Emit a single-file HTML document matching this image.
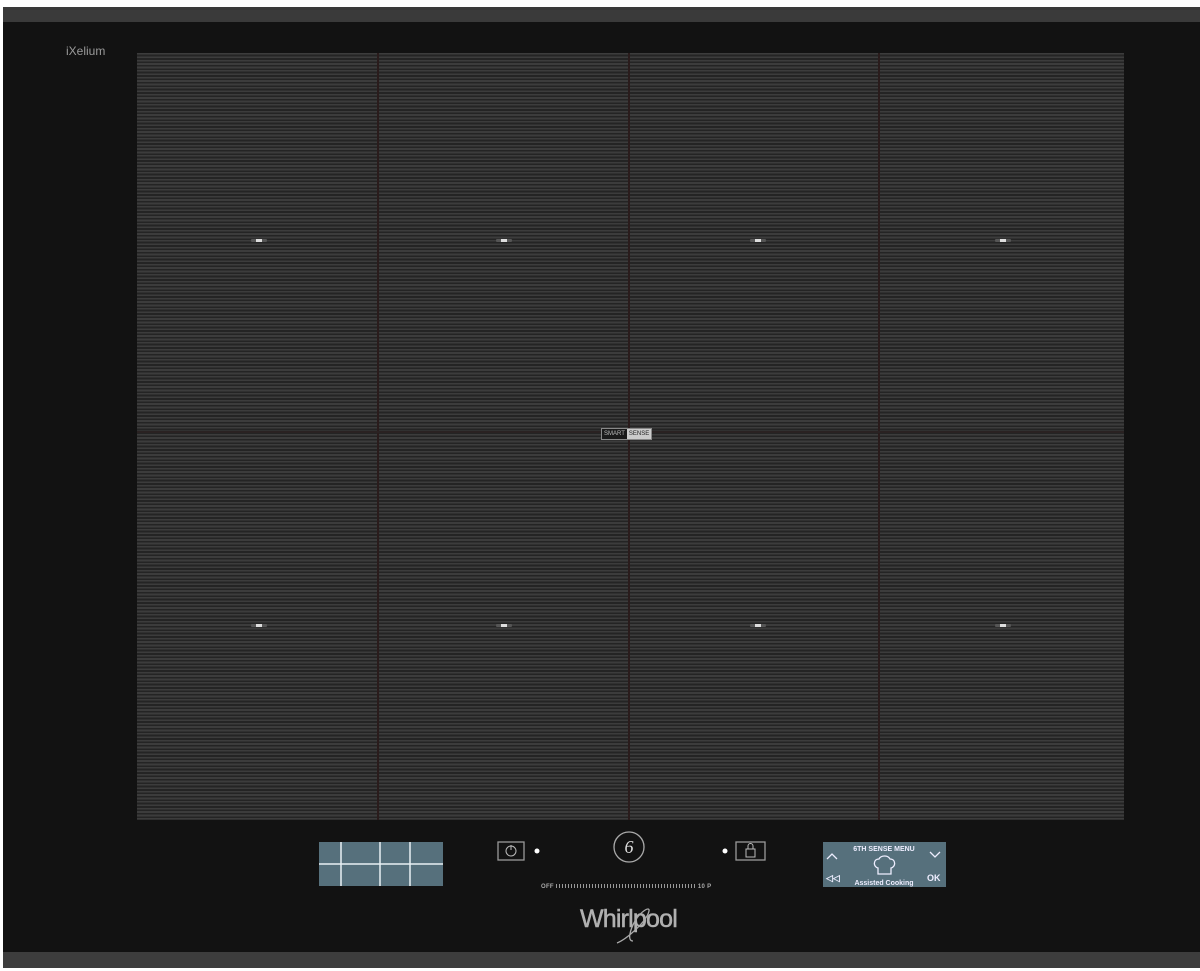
<!DOCTYPE html>
<html><head><meta charset="utf-8"><style>
body{margin:0;width:1200px;height:971px;background:#fff;position:relative;overflow:hidden;font-family:"Liberation Sans",sans-serif}
.frame{position:absolute;left:3px;top:7px;width:1197px;height:961px;background:#121212}
.tb{position:absolute;left:3px;top:7px;width:1197px;height:15px;background:#3a3a3a}
.bb{position:absolute;left:3px;top:952px;width:1197px;height:16px;background:#3d3d3d}
.area{position:absolute;left:137px;top:53px;width:987px;height:767px;background:repeating-linear-gradient(180deg,#3c3c3c 0,#3c3c3c 1.7px,#242424 1.7px,#242424 3.4px)}
.v{position:absolute;top:53px;width:2px;height:767px;background:#2a1c1c}
.h{position:absolute;left:137px;top:431px;width:987px;height:2px;background:#2a2222}
.m{position:absolute;width:16px;height:3px;background:#555;border-radius:1px}
.m::after{content:"";position:absolute;left:5px;top:0;width:6px;height:3px;background:#ddd}
</style></head><body>
<div class="frame"></div><div class="tb"></div><div class="bb"></div>
<div style="position:absolute;left:66px;top:44px;color:#9a9a9a;font-size:12px">iXelium</div>
<div class="area"></div>
<div class="v" style="left:377px"></div><div class="v" style="left:628px"></div><div class="v" style="left:878px"></div>
<div class="h"></div>
<div class="m" style="left:251px;top:239px"></div><div class="m" style="left:496px;top:239px"></div><div class="m" style="left:750px;top:239px"></div><div class="m" style="left:995px;top:239px"></div>
<div class="m" style="left:251px;top:624px"></div><div class="m" style="left:496px;top:624px"></div><div class="m" style="left:750px;top:624px"></div><div class="m" style="left:995px;top:624px"></div>
<div style="position:absolute;left:601px;top:428px;height:10px;border:1px solid #888;background:#1a1a1a;font-size:6px;line-height:10px;color:#bbb;display:flex"><span style="padding:0 2px">SMART</span><span style="background:#ccc;color:#222;padding:0 2px">SENSE</span></div>
<svg style="position:absolute;left:319px;top:842px" width="124" height="44"><rect width="124" height="44" fill="#56707c"/><g stroke="#e8f0f4" stroke-width="1.5"><line x1="0" y1="22" x2="124" y2="22"/><line x1="22" y1="0" x2="22" y2="44"/><line x1="61" y1="0" x2="61" y2="44"/><line x1="91" y1="0" x2="91" y2="44"/></g></svg>
<svg style="position:absolute;left:496px;top:840px" width="50" height="24"><rect x="2" y="2" width="26" height="18" fill="none" stroke="#999" stroke-width="1.3"/><circle cx="15" cy="11" r="5" fill="none" stroke="#bbb"/><line x1="15" y1="5" x2="15" y2="10" stroke="#bbb"/><circle cx="41" cy="11" r="2.5" fill="#fff"/></svg>
<svg style="position:absolute;left:612px;top:830px" width="34" height="34"><circle cx="17" cy="17" r="15" fill="none" stroke="#aaa" stroke-width="1.3"/><text x="17" y="23" text-anchor="middle" font-family="Liberation Serif" font-style="italic" font-size="18" fill="#ddd">6</text></svg>
<svg style="position:absolute;left:718px;top:840px" width="50" height="24"><circle cx="7" cy="11" r="2.5" fill="#fff"/><rect x="18" y="2" width="29" height="18" fill="none" stroke="#999" stroke-width="1.3"/><rect x="28" y="9" width="9" height="8" fill="none" stroke="#bbb"/><path d="M30 9V6a2.5 2.5 0 0 1 5 0v3" fill="none" stroke="#bbb"/></svg>
<div style="position:absolute;left:541px;top:884px;font-size:6px;color:#aaa;font-weight:bold;letter-spacing:0.3px">OFF <span style="display:inline-block;width:140px;height:4px;vertical-align:middle;background:repeating-linear-gradient(90deg,#999 0,#999 1px,transparent 1px,transparent 3px)"></span> 10 P</div>
<svg style="position:absolute;left:823px;top:842px" width="123" height="45"><rect width="123" height="45" fill="#56707c"/><g fill="#eef" font-family="Liberation Sans" font-weight="bold"><text x="61" y="9" font-size="7" text-anchor="middle">6TH SENSE MENU</text><text x="61" y="43" font-size="7" text-anchor="middle">Assisted Cooking</text><text x="104" y="39" font-size="9">OK</text><text x="3" y="39" font-size="9">◁◁</text></g><g fill="none" stroke="#eef" stroke-width="1.3"><path d="M4 17l5-5 5 5"/><path d="M107 10l5 5 5-5"/><path d="M55 26v6h13v-6c5-1 5-9-1-9-2-4-9-4-11 0-6 0-6 8-1 9z"/></g></svg>
<div style="position:absolute;left:580px;top:905px;font-size:25px;color:#b0b0b0;letter-spacing:-0.8px;-webkit-text-stroke:0.5px #b0b0b0">Whirlpool</div>
<svg style="position:absolute;left:612px;top:905px" width="45" height="45"><path d="M5 38c10-4 30-22 32-32 1-5-8 0-14 10-5 9-8 20-2 20" fill="none" stroke="#aaa" stroke-width="1.3"/></svg>
</body></html>
